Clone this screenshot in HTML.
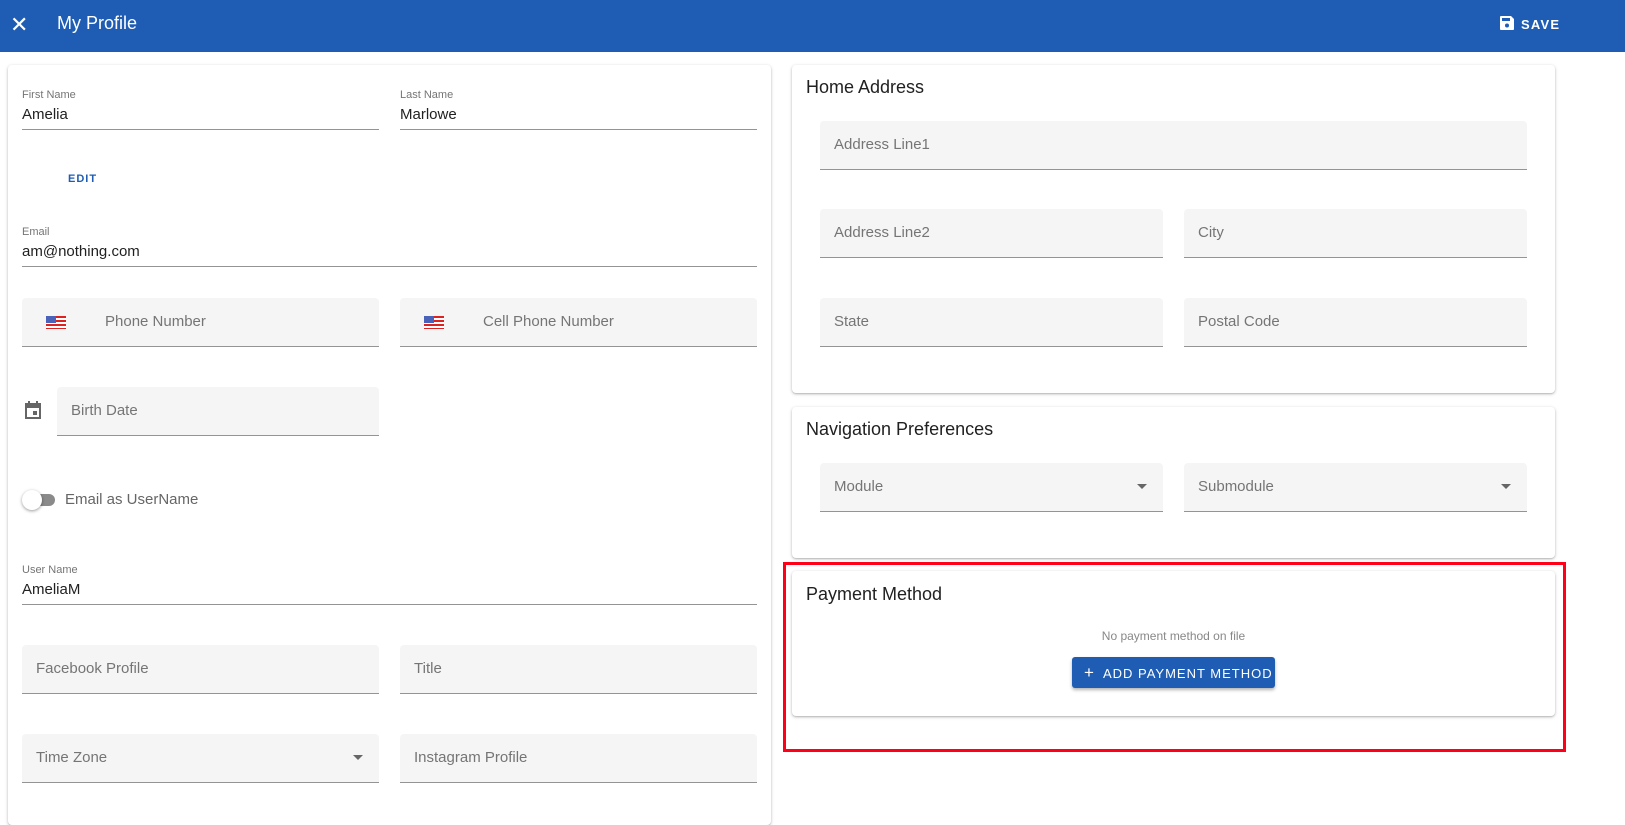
<!DOCTYPE html>
<html><head><style>
*{box-sizing:border-box;margin:0;padding:0}
body{width:1625px;height:808px;overflow:hidden;background:#fff;font-family:"Liberation Sans",sans-serif;position:relative;color:#212121}
.hdr{position:absolute;left:0;top:0;width:1625px;height:52px;background:#1e5db3;color:#fff}
.card{position:absolute;background:#fff;border-radius:4px;box-shadow:0 1px 3px rgba(0,0,0,.25),0 1px 1px rgba(0,0,0,.1)}
.f{position:absolute;background:#f5f5f5;border-radius:4px 4px 0 0;border-bottom:1px solid #949494;height:49px;font-size:15px;color:#757575;line-height:48px;padding-left:14px}
.s{position:absolute;border-bottom:1px solid #949494;height:57px}
.s .l{font-size:11px;color:#757575;margin-top:16px}
.s .v{font-size:15px;color:#212121;margin-top:5px}
.t{position:absolute;font-size:18px;color:#212121;font-weight:500}
.dd{position:absolute;right:16px;top:21px;width:0;height:0;border-left:5px solid transparent;border-right:5px solid transparent;border-top:5px solid #666}
.flag{position:absolute;left:24px;top:18px;width:20px;height:13px;background:repeating-linear-gradient(#d22 0 2px,#fff 2px 4px)}
.flag:after{content:"";position:absolute;left:0;top:0;width:10px;height:7px;background:#4a62b8}
</style></head><body>
<div class="hdr">
<div style="position:absolute;left:10px;top:12px;font-size:22px;">✕</div>
<div style="position:absolute;left:57px;top:13px;font-size:18px">My Profile</div>
<svg style="position:absolute;left:1500px;top:16px" width="14" height="14" viewBox="0 0 14 14"><path d="M0 1a1 1 0 0 1 1-1h10l3 3v10a1 1 0 0 1-1 1H1a1 1 0 0 1-1-1z" fill="#fff"/><rect x="2" y="2" width="8" height="3" fill="#1e5db3"/><circle cx="7" cy="9.5" r="2" fill="#1e5db3"/></svg>
<div style="position:absolute;left:1521px;top:17px;font-size:13px;font-weight:bold;letter-spacing:1.2px">SAVE</div>
</div>

<div class="card" style="left:8px;top:65px;width:763px;height:760px">
<div class="s" style="left:14px;top:8px;width:357px"><div class="l">First Name</div><div class="v">Amelia</div></div>
<div class="s" style="left:392px;top:8px;width:357px"><div class="l">Last Name</div><div class="v">Marlowe</div></div>
<div style="position:absolute;left:60px;top:108px;font-size:11px;font-weight:bold;color:#1e5db3;letter-spacing:1px">EDIT</div>
<div class="s" style="left:14px;top:145px;width:735px"><div class="l">Email</div><div class="v">am@nothing.com</div></div>
<div class="f" style="left:14px;top:233px;width:357px;padding-left:83px"><span class="flag"></span>Phone Number</div>
<div class="f" style="left:392px;top:233px;width:357px;padding-left:83px"><span class="flag"></span>Cell Phone Number</div>
<svg style="position:absolute;left:16px;top:336px" width="18" height="18" viewBox="0 0 18 18"><path d="M2 3h14v14H2z" fill="none" stroke="#666" stroke-width="2"/><rect x="2" y="3" width="14" height="4" fill="#666"/><rect x="4" y="0" width="2" height="4" fill="#666"/><rect x="12" y="0" width="2" height="4" fill="#666"/><rect x="9" y="10" width="4" height="4" fill="#666"/></svg>
<div class="f" style="left:49px;top:322px;width:322px">Birth Date</div>
<div style="position:absolute;left:17px;top:429px;width:30px;height:12px;border-radius:6px;background:#8a8a8a"></div>
<div style="position:absolute;left:14px;top:425px;width:20px;height:20px;border-radius:50%;background:#fff;box-shadow:0 1px 3px rgba(0,0,0,.4)"></div>
<div style="position:absolute;left:57px;top:426px;font-size:15px;color:#666">Email as UserName</div>
<div class="s" style="left:14px;top:483px;width:735px"><div class="l">User Name</div><div class="v">AmeliaM</div></div>
<div class="f" style="left:14px;top:580px;width:357px">Facebook Profile</div>
<div class="f" style="left:392px;top:580px;width:357px">Title</div>
<div class="f" style="left:14px;top:669px;width:357px">Time Zone<span class="dd"></span></div>
<div class="f" style="left:392px;top:669px;width:357px">Instagram Profile</div>
</div>

<div class="card" style="left:792px;top:65px;width:763px;height:328px">
<div class="t" style="left:14px;top:12px">Home Address</div>
<div class="f" style="left:28px;top:56px;width:707px">Address Line1</div>
<div class="f" style="left:28px;top:144px;width:343px">Address Line2</div>
<div class="f" style="left:392px;top:144px;width:343px">City</div>
<div class="f" style="left:28px;top:233px;width:343px">State</div>
<div class="f" style="left:392px;top:233px;width:343px">Postal Code</div>
</div>

<div class="card" style="left:792px;top:407px;width:763px;height:151px">
<div class="t" style="left:14px;top:12px">Navigation Preferences</div>
<div class="f" style="left:28px;top:56px;width:343px">Module<span class="dd"></span></div>
<div class="f" style="left:392px;top:56px;width:343px">Submodule<span class="dd"></span></div>
</div>

<div class="card" style="left:792px;top:571px;width:763px;height:145px">
<div class="t" style="left:14px;top:13px">Payment Method</div>
<div style="position:absolute;left:0;width:763px;top:58px;text-align:center;font-size:12px;color:#888">No payment method on file</div>
<div style="position:absolute;left:280px;top:86px;width:203px;height:31px;background:#1e5db3;border-radius:3px;box-shadow:0 2px 3px rgba(0,0,0,.3);color:#fff;font-size:13px;letter-spacing:1px;line-height:31px;padding-left:12px"><span style="font-size:17px;margin-right:8px">+</span>ADD PAYMENT METHOD</div>
</div>
<div style="position:absolute;left:783px;top:562px;width:783px;height:190px;border:3px solid #ff0018"></div>
</body></html>
